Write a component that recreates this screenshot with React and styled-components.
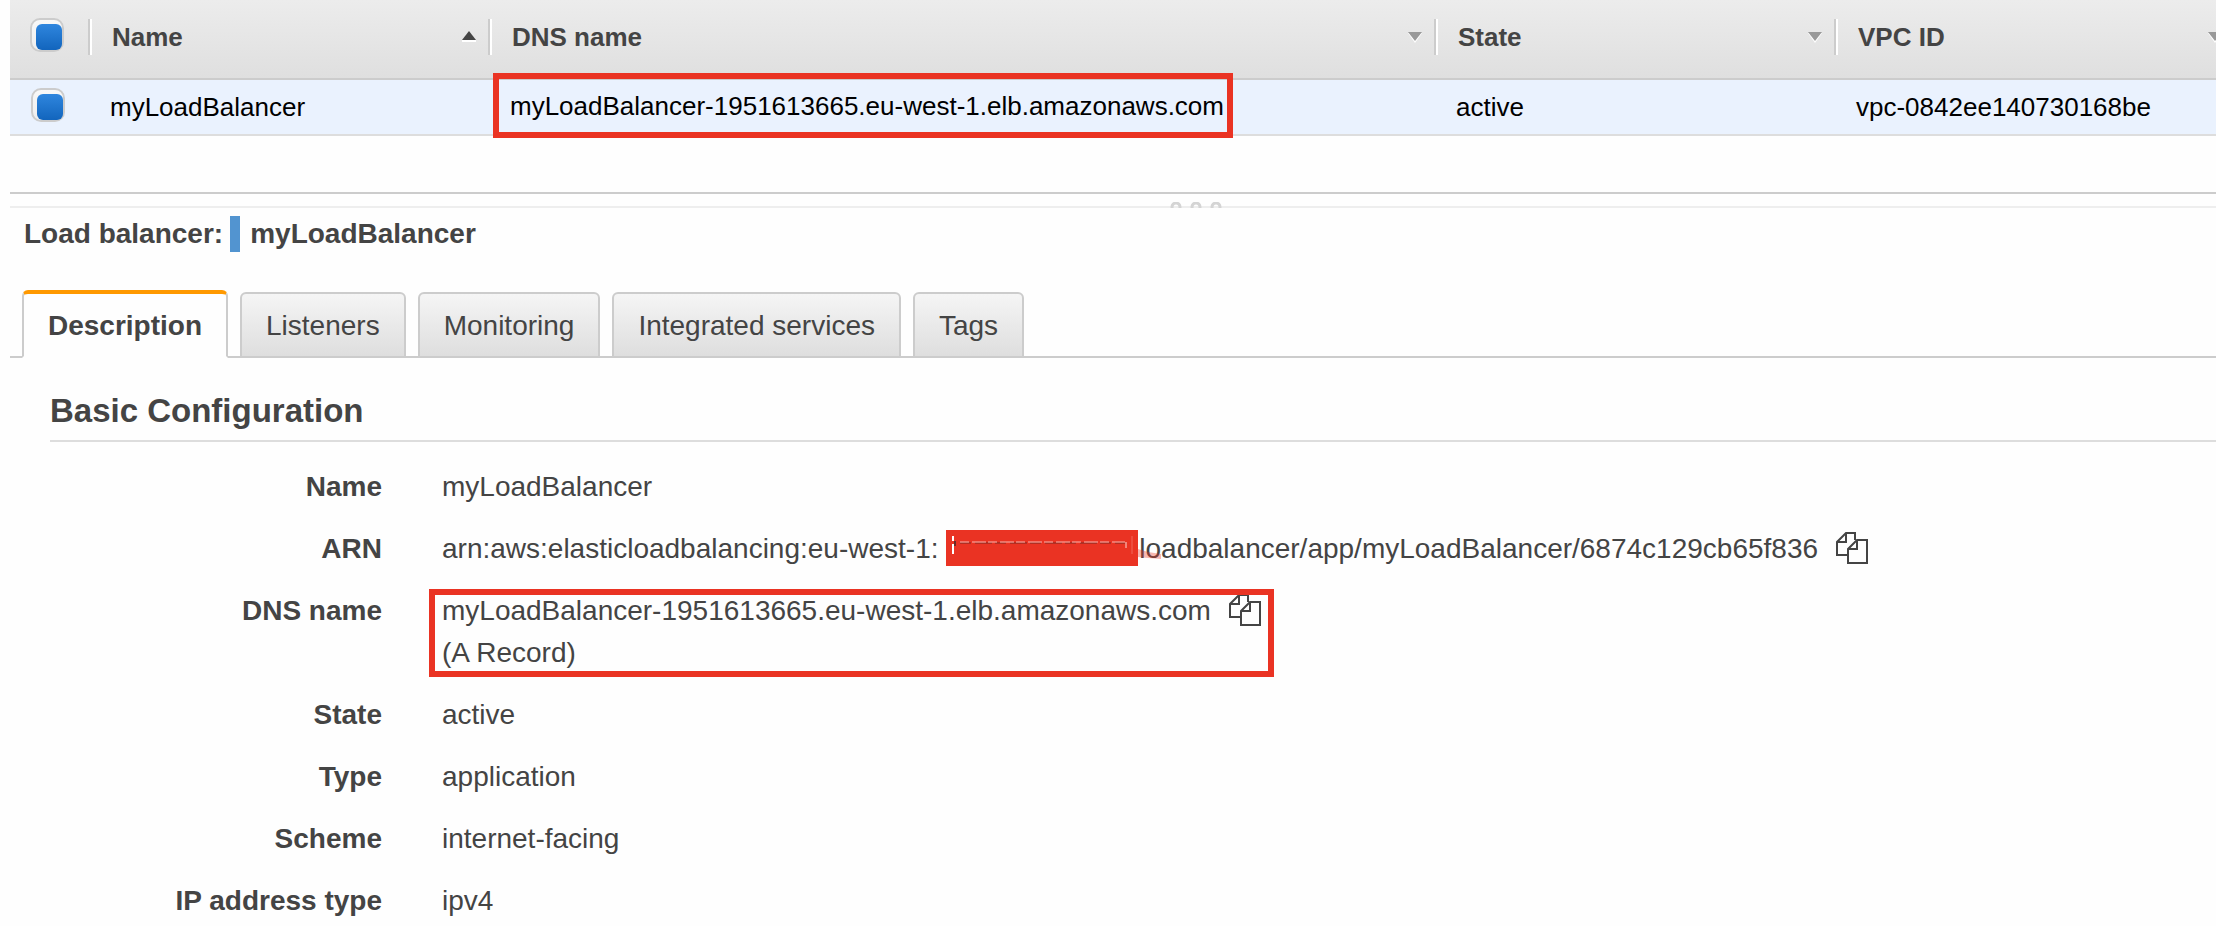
import React, { useState } from "react";
import styled, { createGlobalStyle, css } from "styled-components";

const GlobalStyle = createGlobalStyle`
  * { box-sizing: border-box; }
  body {
    margin: 0;
    background: #fefefe;
    color: #444;
    font-family: "Liberation Sans", Arial, Helvetica, sans-serif;
    font-size: 28px;
  }
`;

const Page = styled.main`
  padding-left: 10px;
  overflow-x: hidden;
`;

const TableArea = styled.section`
  height: 192px;
`;

const Table = styled.table`
  width: calc(100% + 18px);
  table-layout: fixed;
  border-collapse: separate;
  border-spacing: 0;
  font-size: 26px;
  line-height: 30px;
`;

const Col = styled.col`
  width: ${(p) => p.$width || "auto"};
`;

const HeadCell = styled.th`
  height: 80px;
  padding: 0 0 4px;
  border-bottom: 2px solid #ccc;
  text-align: left;
  background: linear-gradient(#ececec, #dfdfdf) no-repeat;
`;

const HeadInner = styled.div`
  display: flex;
  align-items: center;
  justify-content: space-between;
  height: 36px;
  padding: 0 12px 0 22px;
  border-left: 2px solid #ccc;
  box-shadow: inset 2px 0 #fff;
`;

const Cell = styled.td`
  height: 56px;
  padding: 0 0 0 22px;
  border-bottom: 2px solid #ddd;
  background: #eaf2fe;
  color: #000;
`;

const CheckCell = styled(Cell)`
  padding: 0 0 4px 21px;
`;

const CheckHead = styled(HeadCell)`
  padding: 0 0 8px 20px;
`;

const Check = styled.input`
  appearance: none;
  display: block;
  width: 34px;
  height: 34px;
  margin: 0;
  border: 2px solid #ccc;
  border-radius: 10px;
  background: linear-gradient(#f8f8f8, #eee);
  &:checked::before {
    content: "";
    display: block;
    width: 26px;
    height: 26px;
    margin: 4px 0 0 4px;
    border-radius: 6px;
    background: linear-gradient(#2f86de, #1265bd);
  }
`;

const Arrow = styled.svg`
  display: block;
  width: 14px;
  height: 12px;
`;

const TableHighlight = styled.span`
  display: inline-block;
  position: relative;
  z-index: 1;
  margin: -8px 0 -4px -17px;
  padding: 12px 3px 11px 11px;
  border: 6px solid #ea3323;
  vertical-align: middle;
`;

const Splitter = styled.div`
  display: flex;
  align-items: flex-end;
  justify-content: center;
  height: 16px;
  padding-left: 166px;
  border-top: 2px solid #ccc;
  box-shadow: inset 0 -2px #eee;
  svg { display: block; }
`;

const Title = styled.h2`
  display: flex;
  align-items: center;
  height: 52px;
  margin: 0;
  padding-left: 14px;
  font-size: 28px;
  line-height: 36px;
`;

const Marker = styled.span`
  width: 10px;
  height: 36px;
  margin: 0 10px 0 7px;
  background: #5294d0;
`;

const Tabs = styled.div`
  display: flex;
  align-items: flex-end;
  gap: 12px;
  height: 98px;
  padding-left: 12px;
  box-shadow: inset 0 -2px #ccc;
`;

const Tab = styled.button`
  height: 66px;
  padding: 2px 24px 0;
  border: 2px solid #ccc;
  border-radius: 6px 6px 0 0;
  background: linear-gradient(#f5f5f5, #dedede);
  color: #444;
  font: inherit;
  line-height: 32px;
  ${(p) =>
    p.$active &&
    css`
      height: 68px;
      border-top: 4px solid #f90;
      border-bottom-color: #fefefe;
      background: #fefefe;
      font-weight: bold;
    `}
`;

const Panel = styled.section`
  padding: 32px 0 0 40px;
`;

const SectionTitle = styled.h3`
  margin: 0 0 24px;
  padding-bottom: 8px;
  border-bottom: 2px solid #ddd;
  font-size: 33px;
  line-height: 42px;
`;

const Details = styled.dl`
  display: grid;
  grid-template-columns: 332px 1fr;
  gap: 20px 60px;
  margin: 0;
  line-height: 42px;
`;

const Label = styled.dt`
  text-align: right;
  font-weight: bold;
`;

const Value = styled.dd`
  margin: 0;
  white-space: nowrap;
`;

const DetailHighlight = styled.div`
  position: relative;
  width: fit-content;
  height: 84px;
  padding-right: 13px;
  &::after {
    content: "";
    position: absolute;
    inset: -1px 0 -3px -13px;
    border: 6px solid #ea3323;
    pointer-events: none;
  }
`;

const CopyButton = styled.button`
  width: 32px;
  height: 32px;
  margin-left: 18px;
  padding: 0;
  border: 0;
  background: none;
  color: #444;
  vertical-align: -6px;
  svg { display: block; }
`;

const Redaction = styled.span`
  position: relative;
  display: inline-block;
  width: 192px;
  height: 36px;
  margin: 0 -6px 0 7px;
  background: #ea3323;
  vertical-align: -8px;
  svg { display: block; overflow: visible; }
`;

function CopyIcon() {
  return (
    <svg width="32" height="32" viewBox="0 0 32 32" fill="none" stroke="currentColor" strokeWidth="2" aria-hidden="true">
      <path d="M12 23H1V10L10 1h9v7M10 1v9H1" />
      <path d="M12 17l9-9h10v23H12zM21 8v9h-9" />
    </svg>
  );
}

function SortArrow({ up }) {
  return (
    <Arrow viewBox="0 0 14 12" aria-hidden="true">
      <path d={up ? "M0 11h14v-2H0z" : "M0 2l7 10 7-10z"} fill="#fff" />
      <path d={up ? "M7 0l7 9H0z" : "M0 1h14L7 10z"} fill={up ? "#444" : "#999"} />
    </Arrow>
  );
}

function Scribble() {
  return (
    <svg width="192" height="36" viewBox="0 0 192 36" fill="none" aria-hidden="true">
      <path d="M14 13h165" stroke="#7c2a22" strokeWidth="1" strokeDasharray="11 4 17 3" />
      <path d="M14 12h165" stroke="#f9b5ae" strokeWidth="1" strokeDasharray="9 3 14 2" />
      <path d="M180 12v6" stroke="#fbd5d1" strokeWidth="1" />
      <path d="M186 6v18" stroke="#f0675a" strokeWidth="1" />
      <path d="M7 6v5M7 14v10" stroke="#fff" strokeWidth="2" />
      <path d="M9 11v5" stroke="#6b2a26" strokeWidth="2" />
      <path d="M192 19l10 3 13 2v5l-13-1-10-1z" fill="#ea3323" opacity="0.35" />
    </svg>
  );
}

function Copy({ label }) {
  return (
    <CopyButton type="button" aria-label={label}>
      <CopyIcon />
    </CopyButton>
  );
}

const columns = ["Name", "DNS name", "State", "VPC ID"];
const tabs = ["Description", "Listeners", "Monitoring", "Integrated services", "Tags"];
const dns = "myLoadBalancer-1951613665.eu-west-1.elb.amazonaws.com";

export default function App() {
  const [active, setActive] = useState("Description");
  return (
    <Page>
      <GlobalStyle />
      <TableArea>
        <Table>
          <colgroup>
            <Col $width="78px" />
            <Col $width="400px" />
            <Col />
            <Col $width="400px" />
            <Col $width="400px" />
          </colgroup>
          <thead>
            <tr>
              <CheckHead>
                <Check type="checkbox" defaultChecked aria-label="Select all" />
              </CheckHead>
              {columns.map((c) => (
                <HeadCell key={c}>
                  <HeadInner>
                    {c}
                    <SortArrow up={c === "Name"} />
                  </HeadInner>
                </HeadCell>
              ))}
            </tr>
          </thead>
          <tbody>
            <tr>
              <CheckCell>
                <Check type="checkbox" defaultChecked aria-label="Select myLoadBalancer" />
              </CheckCell>
              <Cell>myLoadBalancer</Cell>
              <Cell>
                <TableHighlight>{dns}</TableHighlight>
              </Cell>
              <Cell>active</Cell>
              <Cell>vpc-0842ee140730168be</Cell>
            </tr>
          </tbody>
        </Table>
      </TableArea>
      <Splitter>
        <svg width="52" height="6" viewBox="0 0 52 6" fill="none" stroke="#d4d4d4" strokeWidth="3" aria-hidden="true">
          <circle cx="6" cy="5" r="4" />
          <circle cx="26" cy="5" r="4" />
          <circle cx="46" cy="5" r="4" />
        </svg>
      </Splitter>
      <Title>
        Load balancer:
        <Marker />
        myLoadBalancer
      </Title>
      <Tabs role="tablist">
        {tabs.map((t) => (
          <Tab key={t} type="button" role="tab" aria-selected={t === active} $active={t === active} onClick={() => setActive(t)}>
            {t}
          </Tab>
        ))}
      </Tabs>
      <Panel>
        <SectionTitle>Basic Configuration</SectionTitle>
        <Details>
          <Label>Name</Label>
          <Value>myLoadBalancer</Value>
          <Label>ARN</Label>
          <Value>
            arn:aws:elasticloadbalancing:eu-west-1:
            <Redaction>
              <Scribble />
            </Redaction>
            :loadbalancer/app/myLoadBalancer/6874c129cb65f836
            <Copy label="Copy ARN" />
          </Value>
          <Label>DNS name</Label>
          <Value>
            <DetailHighlight>
              {dns}
              <Copy label="Copy DNS name" />
              <br />
              (A Record)
            </DetailHighlight>
          </Value>
          <Label>State</Label>
          <Value>active</Value>
          <Label>Type</Label>
          <Value>application</Value>
          <Label>Scheme</Label>
          <Value>internet-facing</Value>
          <Label>IP address type</Label>
          <Value>ipv4</Value>
        </Details>
      </Panel>
    </Page>
  );
}
